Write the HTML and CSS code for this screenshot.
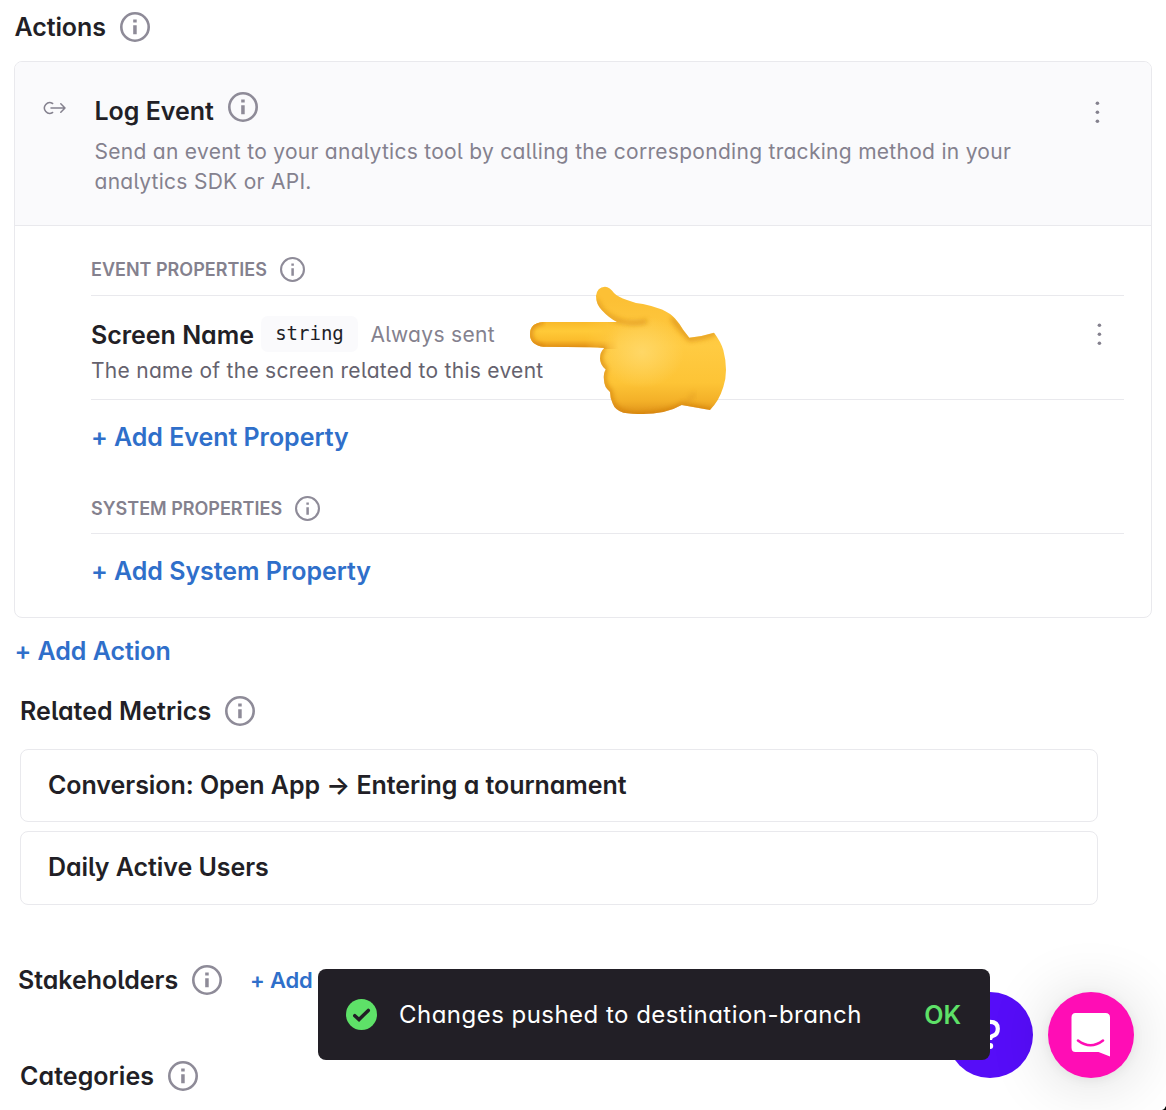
FILE: index.html
```html
<!DOCTYPE html>
<html lang="en">
<head>
<meta charset="utf-8">
<title>Event actions</title>
<link rel="stylesheet" href="styles.css">
</head>
<body>
<svg class="defs" width="0" height="0" aria-hidden="true">
  <symbol id="info" viewBox="0 0 30 30">
    <circle cx="15" cy="15" r="13.7" fill="none" stroke="currentColor" stroke-width="2.6"/>
    <path d="M13.2 7.6h3.5v2.9h-3.5zM13.2 13.3h3.5v9h-3.5z" fill="currentColor"/>
  </symbol>
  <symbol id="info-small" viewBox="0 0 24 24">
    <circle cx="12" cy="12" r="11" fill="none" stroke="currentColor" stroke-width="2"/>
    <path d="M10.9 6.2h2.4v2.2h-2.4zM10.9 10.7h2.4v7.2h-2.4z" fill="currentColor"/>
  </symbol>
  <symbol id="dots" viewBox="0 0 6 24">
    <circle cx="3.400" cy="3.300" r="1.8" fill="currentColor"/>
    <circle cx="3.400" cy="12.300" r="1.8" fill="currentColor"/>
    <circle cx="3.400" cy="21.300" r="1.8" fill="currentColor"/>
  </symbol>
</svg>
<main class="page">
  <h2 class="heading actions-heading"><span class="t-actions">Actions</span><svg class="info"><use href="#info"/></svg></h2>

  <section class="card">
    <header class="card-head">
      <svg class="flow-icon" viewBox="0 0 24 14" fill="none" stroke="currentColor" stroke-width="1.5" stroke-linecap="round" stroke-linejoin="round">
        <path d="M9.6 2.5A5.3 5.3 0 1 0 9.6 11.5M8 7H22M17.8 2.8L22 7L17.8 11.2"/>
      </svg>
      <div class="card-intro">
        <h3 class="heading log-title"><span class="t-log">Log Event</span><svg class="info raised"><use href="#info"/></svg></h3>
        <p class="intro">Send an event to your analytics tool by calling the corresponding tracking method in your<br>analytics SDK or API.</p>
      </div>
      <svg class="dots"><use href="#dots"/></svg>
    </header>
    <div class="card-body">
      <h4 class="label event-label"><span class="t-event">EVENT PROPERTIES</span><svg class="info-small"><use href="#info-small"/></svg></h4>
      <div class="property">
        <div class="property-text">
          <div class="property-line">
            <strong class="property-name">Screen Name</strong>
            <code class="chip">string</code>
            <span class="sent">Always sent</span>
          </div>
          <p class="property-desc">The name of the screen related to this event</p>
        </div>
        <svg class="dots"><use href="#dots"/></svg>
        <svg class="hand" viewBox="0 0 210 130">
          <defs>
            <linearGradient id="palm" gradientUnits="userSpaceOnUse" x1="0" y1="15" x2="0" y2="130">
              <stop offset="0" stop-color="#fcc035"/><stop offset=".4" stop-color="#ffcb42"/><stop offset=".72" stop-color="#fdc436"/><stop offset=".88" stop-color="#f3b028"/><stop offset="1" stop-color="#de9018"/>
            </linearGradient>
            <linearGradient id="finger" gradientUnits="userSpaceOnUse" x1="0" y1="37" x2="0" y2="63">
              <stop offset="0" stop-color="#f9b929"/><stop offset=".35" stop-color="#ffca38"/><stop offset=".7" stop-color="#fbbc2c"/><stop offset="1" stop-color="#dc8812"/>
            </linearGradient>
            <linearGradient id="fade" gradientUnits="userSpaceOnUse" x1="65" y1="0" x2="98" y2="0">
              <stop offset="0" stop-color="#fff"/><stop offset="1" stop-color="#000"/>
            </linearGradient>
            <mask id="finger-mask"><path d="M0 30H110V70H0Z" fill="url(#fade)"/></mask>
            <radialGradient id="glow"><stop offset="0" stop-color="#ffd766"/><stop offset="1" stop-color="#ffd766" stop-opacity="0"/></radialGradient>
            <filter id="soft" x="-20%" y="-50%" width="140%" height="200%"><feGaussianBlur stdDeviation="2.4"/></filter>
            <path id="hand-shape" d="M97 37Q89 33 81.700 25Q76 19 76 11Q77 2 85 1.700Q90 2 94 8Q98 12 107 15Q114 18 123 19Q133 21 142 24.500Q150 28 155 33.500Q160 39 163.300 45L169.300 52.700Q182 51.500 194 47.700Q201 57 203.300 65Q206 75 206 85Q206 94 203.300 102Q199 116 190 125L161.700 120Q153 125 143.300 127Q133 129 123.300 129Q111 129 103.300 127.700Q95 125 92.700 118.500Q90 113 90 107Q84 102 84 95Q83 89 85.700 84.500Q80 80 80 73.300Q80 67 84.300 63Q78 62.300 70 62.300L23.300 61.700Q10 60 10 49Q10 38 23 37Z"/>
            <clipPath id="hand-clip"><use href="#hand-shape"/></clipPath>
          </defs>
          <use href="#hand-shape" fill="url(#palm)"/>
          <g clip-path="url(#hand-clip)">
            <ellipse cx="122" cy="67" rx="42" ry="36" fill="url(#glow)"/>
            <path d="M5 36H105V64H5Z" fill="url(#finger)" mask="url(#finger-mask)"/>
            <path d="M76 15Q82 31 100 36Q113 40 127 36" fill="none" stroke="#d98c14" stroke-width="3.400" opacity=".85" filter="url(#soft)"/>
            <path d="M152 33Q160 44 170 54Q184 53 196 47" fill="none" stroke="#d98c14" stroke-width="4" opacity=".85" filter="url(#soft)"/>
            <path d="M84 62Q75 73 85 84Q80 96 90 107Q90 128 115 130Q145 130 162 120L191 126" fill="none" stroke="#d07d10" stroke-width="4" opacity=".85" filter="url(#soft)"/>
            <path d="M162 120Q172 115 174 108" fill="none" stroke="#e09a20" stroke-width="4" opacity=".5" filter="url(#soft)"/>
            <path d="M23 37Q10 38 10 49Q10 60 23 62" fill="none" stroke="#d98412" stroke-width="4" filter="url(#soft)"/>
          </g>
        </svg>
      </div>
      <a class="link add-event">+ Add Event Property</a>
      <h4 class="label system-label"><span class="t-system">SYSTEM PROPERTIES</span><svg class="info-small"><use href="#info-small"/></svg></h4>
      <a class="link add-system">+ Add System Property</a>
    </div>
  </section>

  <a class="link add-action">+ Add Action</a>

  <section class="metrics">
    <h2 class="heading"><span class="t-metrics">Related Metrics</span><svg class="info"><use href="#info"/></svg></h2>
    <div class="metric"><span class="t-conversion">Conversion: Open App → Entering a tournament</span></div>
    <div class="metric"><span class="t-daily">Daily Active Users</span></div>
  </section>

  <h2 class="heading stakeholders"><span class="t-stake">Stakeholders</span><svg class="info"><use href="#info"/></svg><a class="link add-small">+ Add</a></h2>
  <h2 class="heading categories"><span class="t-cat">Categories</span><svg class="info"><use href="#info"/></svg></h2>
</main>

<div class="bubble help">
  <svg viewBox="0 0 86 86" fill="none" stroke="#fff" stroke-width="4.2"><path d="M36 36Q36 29.800 43 29.800Q50.800 29.800 50.800 36.700Q50.800 42.500 45.500 44Q43 45 43 48"/><circle cx="43.300" cy="54" r="2.900" fill="#fff" stroke="none"/></svg>
</div>
<div class="bubble chat">
  <svg viewBox="0 0 86 86"><path d="M27.500 21H57.500Q62 21 62 25.500V64.500L50.500 60H27.500Q23.500 60 23.500 55.500V25.500Q23.500 21 27.500 21Z" fill="#fff"/><path d="M30 48.500Q42.500 58 55 48.500" fill="none" stroke="#ff0db5" stroke-width="2.600" stroke-linecap="round"/></svg>
</div>
<div class="toast">
  <svg class="check" viewBox="0 0 31 31"><circle cx="15.500" cy="15.500" r="15.500" fill="#5ee168"/><path d="M8.800 16.700L13 20.500L22.300 11.400" fill="none" stroke="#221f26" stroke-width="3.500" stroke-linecap="round" stroke-linejoin="miter"/></svg>
  <span class="toast-text">Changes pushed to destination-branch</span>
  <span class="ok">OK</span>
</div>
<svg class="corner" viewBox="0 0 4 4"><path d="M4 0V4H0Q3 3 4 0Z"/></svg>
</body>
</html>
```
FILE: styles.css
```css
* { box-sizing: border-box; }
body {
  margin: 0;
  width: 1166px;
  height: 1110px;
  overflow: hidden;
  position: relative;
  background: #fff;
  color: #221f26;
  font-family: Inter, "Liberation Sans", sans-serif;
  font-feature-settings: "cv11" 1, "cv05" 1;
}
h2, h3, h4, p { margin: 0; }
svg { display: block; flex: none; }
.defs { position: absolute; }
.page { padding: 0 14px; }
.heading {
  display: flex;
  align-items: center;
  gap: 14px;
  height: 30px;
  font-size: 25px;
  line-height: 30px;
  font-weight: 600;
  letter-spacing: -.03px;
  white-space: nowrap;
}
.info { width: 30px; height: 30px; color: #8e8b98; }
.info-small { width: 25px; height: 25px; color: #8e8b98; }
.dots { width: 6px; height: 24px; color: #84818e; }
.actions-heading { margin: 12px 0 19px .5px; }
.t-actions { letter-spacing: -.1px; }
.t-metrics { letter-spacing: .06px; }
.t-cat { letter-spacing: .06px; }
.card { width: 1138px; height: 557px; border: 1px solid #e9e9ed; border-radius: 8px; }
.card-head {
  display: flex;
  align-items: flex-start;
  height: 164px;
  padding-top: 34px;
  background: #fafafc;
  border-bottom: 1px solid #e9e9ed;
  border-radius: 7px 7px 0 0;
}
.flow-icon { width: 24px; height: 14px; margin: 5px 27.5px 0 28px; color: #84818e; }
.card-intro { flex: 1; }
.raised { margin-top: -8px; }
.intro { margin-top: 11px; font-size: 21px; line-height: 30px; color: #84818e; letter-spacing: .285px; white-space: nowrap; }
.card-head .dots { margin: 4px 51px 0 0; }
.card-body { padding: 0 27px 0 76px; }
.label {
  display: flex;
  align-items: center;
  gap: 13px;
  font-size: 18px;
  line-height: 24px;
  font-weight: 600;
  color: #84818e;
  border-bottom: 1px solid #e9e9ed;
}
.event-label { height: 70px; padding-top: 18px; }
.property { position: relative; display: flex; height: 104px; padding: 20px 22px 0 0; border-bottom: 1px solid #e9e9ed; }
.property-text { flex: 1; }
.property-line { display: flex; align-items: center; height: 36px; white-space: nowrap; }
.property-name { font-size: 25px; font-weight: 600; width: 170px; padding-top: 2px; letter-spacing: -.03px; }
.chip {
  width: 97px;
  height: 36px;
  border-radius: 7px;
  background: #fafafc;
  font: 19px/34px "DejaVu Sans Mono", monospace;
  text-align: center;
}
.sent { margin-left: 12.5px; font-size: 21px; color: #84818e; letter-spacing: .34px; }
.property-desc { margin-top: 5px; font-size: 21px; line-height: 28px; color: #65626e; letter-spacing: .28px; }
.property .dots { margin-top: 6px; }
.hand { position: absolute; left: 429px; top: -11px; width: 210px; height: 130px; overflow: visible; }
.link { display: block; font-size: 25px; line-height: 30px; font-weight: 600; color: #2f6fca; white-space: nowrap; letter-spacing: -.04px; }
.add-event { margin-top: 22px; }
.system-label { height: 82px; padding-top: 31px; }
.t-system { padding-top: 1px; }
.add-system { margin-top: 22px; }
.add-action { margin: 18px 0 0 .5px; }
.metrics { width: 1078px; margin: 30px 0 0 6px; }
.metric {
  display: flex;
  align-items: center;
  height: 74px;
  margin-top: 8px;
  padding: 0 0 2px 27px;
  border: 1px solid #e9e9ed;
  border-radius: 8px;
  font-size: 25px;
  font-weight: 600;
  letter-spacing: -.05px;
  white-space: nowrap;
}
.heading + .metric { margin-top: 23px; height: 73px; margin-bottom: 9px; }
.stakeholders { margin: 60px 0 0 4px; }
.categories { margin: 66px 0 0 6px; }
.add-small { font-size: 22px; margin-left: 14px; letter-spacing: -.2px; }
.bubble { position: absolute; top: 992px; width: 86px; height: 86px; border-radius: 50%; }
.help { left: 947px; background: #560df8; }
.chat { left: 1048px; background: #ff0db5; box-shadow: 0 2px 12px rgba(0,0,0,.06), 0 4px 64px rgba(0,0,0,.16); }
.toast {
  position: absolute;
  left: 318px;
  top: 969px;
  width: 672px;
  height: 91px;
  display: flex;
  align-items: center;
  padding: 0 29px 0 28px;
  border-radius: 8px;
  background: #221f26;
  color: #fff;
  font-size: 25px;
  white-space: nowrap;
}
.check { width: 31px; height: 31px; margin-right: 22px; }
.toast-text { font-size: 24px; letter-spacing: .47px; }
.ok { margin-left: auto; color: #5ee168; font-weight: 600; }
.corner { position: absolute; right: 0; bottom: 0; width: 4px; height: 4px; }
```
